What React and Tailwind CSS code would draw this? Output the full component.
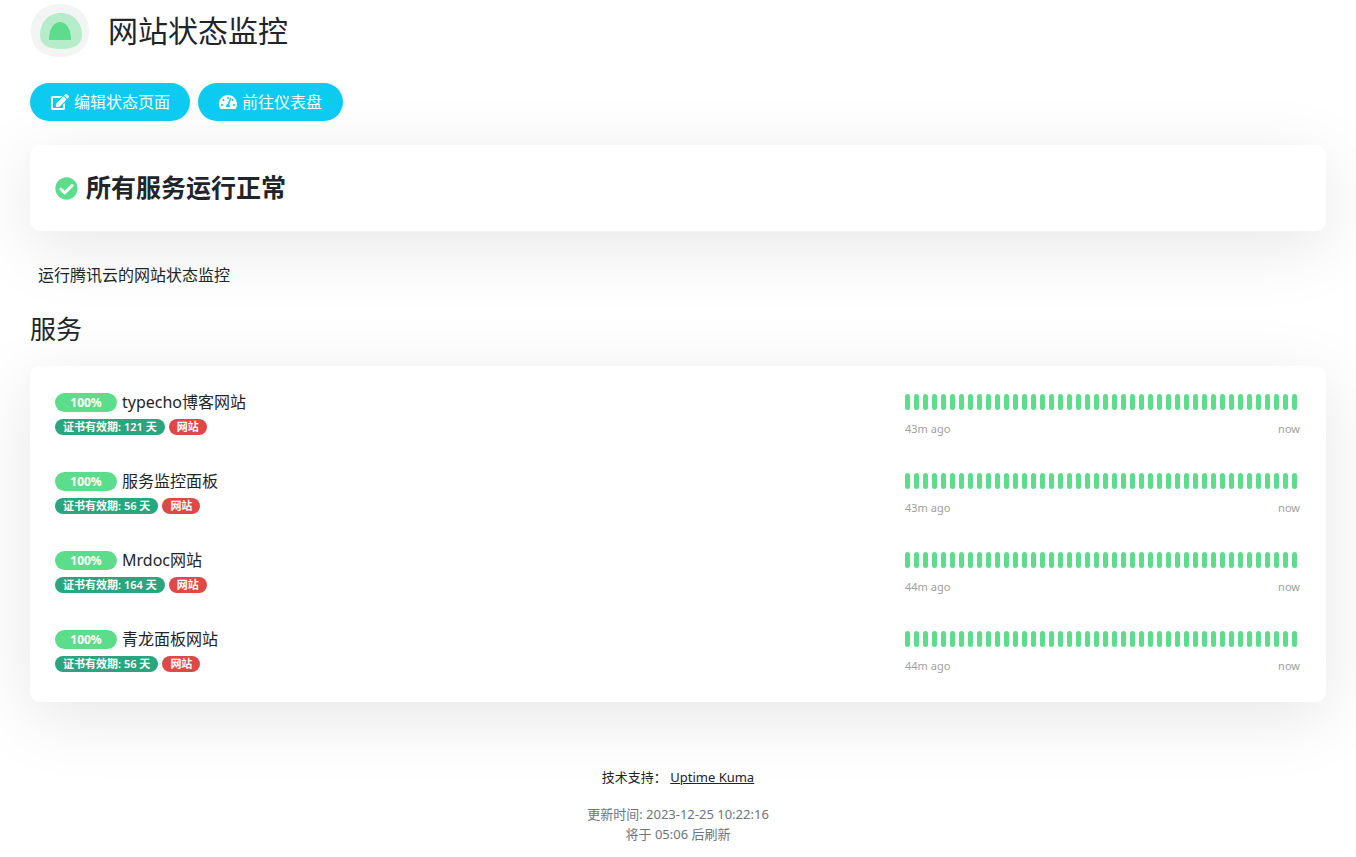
import { FaEdit, FaTachometerAlt, FaCheckCircle } from "react-icons/fa";

const monitors = [
  { name: "typecho博客网站", days: 121, since: "43m ago" },
  { name: "服务监控面板", days: 56, since: "43m ago" },
  { name: "Mrdoc网站", days: 164, since: "44m ago" },
  { name: "青龙面板网站", days: 56, since: "44m ago" },
];

const beats = Array.from({ length: 44 });

const Logo = () => (
  <svg width="60" height="56" viewBox="0 0 60 56">
    <path
      d="M30 1 C47 1 59 12 59 28 C59 44 48 54 30 54 C12 54 1 45 1 28 C1 12 13 1 30 1 Z"
      fill="#f3f4f4"
    />
    <path
      d="M31 10 C43 10 52 19 52 32 C52 41 45 46 31 46 C17 46 10 41 10 32 C10 19 19 10 31 10 Z"
      fill="#b6ecc9"
    />
    <path
      d="M30 19 C36 19 41 25 41 37 L19 37 C19 25 24 19 30 19 Z"
      fill="#5cdd8b"
    />
  </svg>
);

const App = () => {
  return (
    <div
      className="min-h-screen bg-white text-[#212529] px-[30px]"
      style={{ fontFamily: '"Noto Sans", "Noto Sans CJK SC", sans-serif' }}
    >
      {/* Header */}
      <div className="flex items-center gap-[18px] pt-[2px] h-[60px]">
        <Logo />
        <h1 className="text-[30px] leading-none font-normal">网站状态监控</h1>
      </div>

      {/* Buttons */}
      <div className="flex gap-[8px] mt-[23px]">
        <button className="flex items-center gap-[5px] h-[38px] pl-[21px] pr-[20px] rounded-full bg-[#0dcaf0] text-white text-[16px]">
          <FaEdit className="text-[18px]" />
          编辑状态页面
        </button>
        <button className="flex items-center gap-[5px] h-[38px] pl-[21px] pr-[21px] rounded-full bg-[#0dcaf0] text-white text-[16px]">
          <FaTachometerAlt className="text-[18px]" />
          前往仪表盘
        </button>
      </div>

      {/* Overall status */}
      <div className="mt-[24px] h-[86px] rounded-[10px] bg-white shadow-[0_15px_70px_rgba(0,0,0,0.1)] flex items-center px-[25px] gap-[8px]">
        <FaCheckCircle className="text-[23px] text-[#5cdd8b]" />
        <span className="text-[25px] font-bold">所有服务运行正常</span>
      </div>

      <p className="mt-[33px] ml-[8px] text-[16px] leading-[22px]">运行腾讯云的网站状态监控</p>

      <h2 className="mt-[26px] text-[26px] leading-[34px] font-normal">服务</h2>

      {/* Monitor list */}
      <div className="mt-[20px] rounded-[10px] bg-white shadow-[0_15px_70px_rgba(0,0,0,0.1)] py-[10px] pl-[25px] pr-[26px]">
        {monitors.map((m) => (
          <div key={m.name} className="h-[79px] pt-[17px] flex justify-between">
            <div className="flex flex-col">
              <div className="flex items-center gap-[5px]">
                <span className="w-[62px] h-[19px] rounded-full bg-[#5cdd8b] text-white text-[12px] font-bold flex items-center justify-center">
                  100%
                </span>
                <span className="text-[16px] leading-[19px]">{m.name}</span>
              </div>
              <div className="flex gap-[4px] mt-[7px]">
                <span className="h-[16px] px-[8px] rounded-full bg-[#2aa57e] text-white text-[11px] font-semibold flex items-center">
                  证书有效期: {m.days} 天
                </span>
                <span className="h-[16px] px-[8px] rounded-full bg-[#e04848] text-white text-[11px] font-semibold flex items-center">
                  网站
                </span>
              </div>
            </div>
            <div className="w-[395px] flex flex-col">
              <div className="flex gap-[4px] mt-[1px]">
                {beats.map((_, i) => (
                  <span key={i} className="w-[5px] h-[16px] rounded-full bg-[#5cdd8b]" />
                ))}
              </div>
              <div className="flex justify-between text-[11px] text-[#a0a0a0] mt-[12px] leading-[14px]">
                <span>{m.since}</span>
                <span>now</span>
              </div>
            </div>
          </div>
        ))}
      </div>

      {/* Footer */}
      <div className="mt-[66px] pb-[14px] text-center text-[13px]">
        <p className="leading-[18px]">
          技术支持：{" "}
          <a href="#" className="underline">
            Uptime Kuma
          </a>
        </p>
        <p className="mt-[18px] leading-[20px] text-[#6c757d]">更新时间: 2023-12-25 10:22:16</p>
        <p className="leading-[20px] text-[#6c757d]">将于 05:06 后刷新</p>
      </div>
    </div>
  );
};

export default App;
